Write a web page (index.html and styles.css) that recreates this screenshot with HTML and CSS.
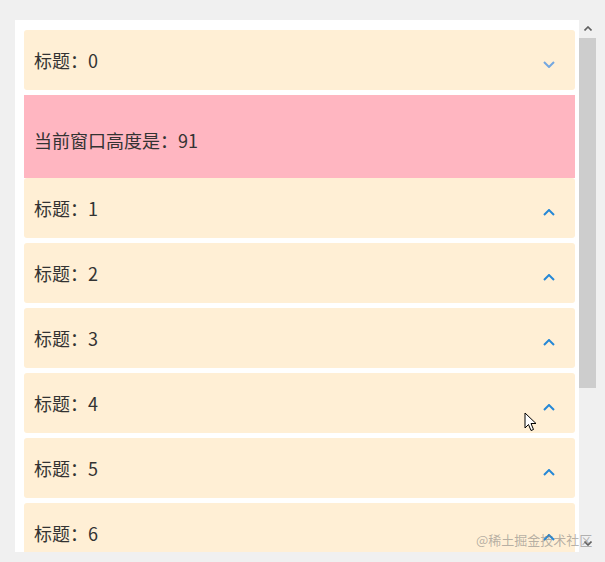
FILE: index.html
```html
<!DOCTYPE html>
<html lang="zh">
<head>
<meta charset="utf-8">
<title>列表</title>
<link rel="stylesheet" href="styles.css">
</head>
<body>
<div class="frame">
  <div class="pane">
    <div class="item">
      <span class="title">标题：0</span>
      <svg class="chev chev-down" width="12" height="7" viewBox="0 0 12 7"><path d="M1 1 L6 6 L11 1" fill="none" stroke="currentColor" stroke-width="2"/></svg>
    </div>
    <div class="panel">当前窗口高度是：91</div>
    <div class="item">
      <span class="title">标题：1</span>
      <svg class="chev" width="12" height="7" viewBox="0 0 12 7"><path d="M1 6 L6 1 L11 6" fill="none" stroke="currentColor" stroke-width="2"/></svg>
    </div>
    <div class="item">
      <span class="title">标题：2</span>
      <svg class="chev" width="12" height="7" viewBox="0 0 12 7"><path d="M1 6 L6 1 L11 6" fill="none" stroke="currentColor" stroke-width="2"/></svg>
    </div>
    <div class="item">
      <span class="title">标题：3</span>
      <svg class="chev" width="12" height="7" viewBox="0 0 12 7"><path d="M1 6 L6 1 L11 6" fill="none" stroke="currentColor" stroke-width="2"/></svg>
    </div>
    <div class="item">
      <span class="title">标题：4</span>
      <svg class="chev" width="12" height="7" viewBox="0 0 12 7"><path d="M1 6 L6 1 L11 6" fill="none" stroke="currentColor" stroke-width="2"/></svg>
    </div>
    <div class="item">
      <span class="title">标题：5</span>
      <svg class="chev" width="12" height="7" viewBox="0 0 12 7"><path d="M1 6 L6 1 L11 6" fill="none" stroke="currentColor" stroke-width="2"/></svg>
    </div>
    <div class="item">
      <span class="title">标题：6</span>
      <svg class="chev" width="12" height="7" viewBox="0 0 12 7"><path d="M1 6 L6 1 L11 6" fill="none" stroke="currentColor" stroke-width="2"/></svg>
    </div>
  </div>
  <div class="scrollbar">
    <div class="sb-btn"><svg width="8" height="5" viewBox="0 0 8 5"><path d="M0.5 4.5 L4 1 L7.5 4.5" fill="none" stroke="#606060" stroke-width="1.6"/></svg></div>
    <div class="sb-thumb"></div>
    <div class="sb-track"></div>
    <div class="sb-btn"><svg width="8" height="5" viewBox="0 0 8 5"><path d="M0.5 0.5 L4 4 L7.5 0.5" fill="none" stroke="#606060" stroke-width="1.6"/></svg></div>
  </div>
</div>
<svg class="cursor" width="13" height="20" viewBox="0 0 13 20"><path d="M1 1 L1 16 L4.5 12.5 L7 18.5 L9.5 17.5 L7 11.5 L12 11.5 Z" fill="#fff" stroke="#000" stroke-width="1" stroke-linejoin="round"/></svg>
<div class="watermark">@稀土掘金技术社区</div>
</body>
</html>
```

FILE: styles.css
```css
html, body {
  margin: 0;
  padding: 0;
  background: #f0f0f0;
  font-family: "Noto Sans CJK SC", "Microsoft YaHei", sans-serif;
  color: #333;
}

body {
  width: 605px;
  height: 562px;
  overflow: hidden;
  position: relative;
}

.frame {
  display: flex;
  margin: 20px 0 0 15px;
  width: 583px;
  height: 532px;
}

.pane {
  width: 551px;
  background: #fff;
  padding: 10px 4px 0 9px;
  overflow: hidden;
  display: flex;
  flex-direction: column;
  flex-shrink: 0;
}

.item {
  flex: 0 0 60px;
  height: 60px;
  margin-bottom: 5px;
  background: #ffefd5;
  border-radius: 3px;
  display: flex;
  align-items: center;
  justify-content: space-between;
  padding: 0 20px 0 10px;
  box-sizing: border-box;
  font-size: 18px;
  line-height: 26px;
}

.title {
  margin-top: -1px;
}

.chev {
  color: #2588d6;
  margin-top: 8px;
}

.chev-down {
  color: #74a7e0;
}

.panel {
  flex: 0 0 83px;
  height: 83px;
  background: #ffb6c1;
  display: flex;
  align-items: center;
  box-sizing: border-box;
  padding: 7px 10px 0 10px;
  font-size: 18px;
  line-height: 26px;
}

.scrollbar {
  width: 19px;
  display: flex;
  flex-direction: column;
  background: #f0f0f0;
}

.sb-btn {
  height: 17px;
  display: flex;
  align-items: center;
  justify-content: center;
  padding-right: 2px;
}

.sb-thumb {
  height: 350px;
  width: 17px;
  margin-top: 1px;
  background: #cdcdcd;
}

.sb-track {
  flex: 1;
}

.cursor {
  position: absolute;
  left: 524px;
  top: 412px;
}

.watermark {
  position: absolute;
  left: 476px;
  top: 530px;
  font-size: 13px;
  line-height: 20px;
  color: rgba(120, 120, 120, 0.55);
  white-space: nowrap;
}
```
